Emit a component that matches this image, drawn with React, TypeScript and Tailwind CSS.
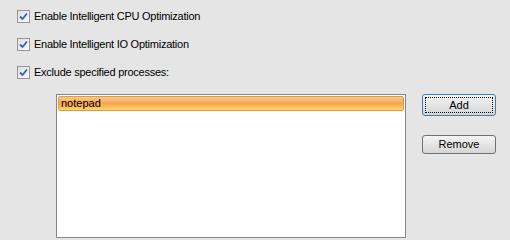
const Check = ({label}: {label: string}) => {
    return <div className="flex items-center h-[28px]">
        <div className="w-[13px] h-[13px] border border-[#969696] bg-gradient-to-br from-[#dcdcdc] to-[#ffffff] flex items-center justify-center">
            <svg width="9" height="9" viewBox="0 0 9 9">
                <path d="M1 4.5 L3.5 7 L8 1.5" stroke="#2d62c4" strokeWidth="1.8" fill="none"/>
            </svg>
        </div>
        <span className="ml-[4px] text-[11px] tracking-[-0.25px] text-black">{label}</span>
    </div>
}

export default function App() {
    return <div className="w-[510px] h-[240px] bg-[#e5e5e5] overflow-hidden" style={{fontFamily: '"Liberation Sans", Arial, sans-serif'}}>
        <div className="pl-[17px] pt-[2px]">
            <Check label="Enable Intelligent CPU Optimization"/>
            <Check label="Enable Intelligent IO Optimization"/>
            <Check label="Exclude specified processes:"/>
        </div>
        <div className="flex mt-[8px] ml-[56px]">
            <div className="w-[350px] h-[144px] bg-white border border-[#828790] p-[1px]">
                <div className="h-[15px] border border-[#e59a3c] rounded-[2px] bg-gradient-to-b from-[#fbc98f] via-[#f7a54e] to-[#fcd66c] text-[11px] leading-[13px] pl-[2px] text-black">
                    notepad
                </div>
            </div>
            <div className="flex flex-col ml-[16px] gap-[19px]">
                <button className="w-[74px] h-[22px] border border-[#3c7fb1] rounded-[3px] bg-gradient-to-b from-[#f4f4f4] to-[#d6d6d6] p-[2px] text-[11px] text-black">
                    <div className="w-full h-full border border-dotted border-black flex items-center justify-center">Add</div>
                </button>
                <button className="w-[74px] h-[19px] border border-[#707070] rounded-[3px] bg-gradient-to-b from-[#f4f4f4] to-[#d6d6d6] text-[11px] text-black flex items-center justify-center">
                    Remove
                </button>
            </div>
        </div>
    </div>
}
